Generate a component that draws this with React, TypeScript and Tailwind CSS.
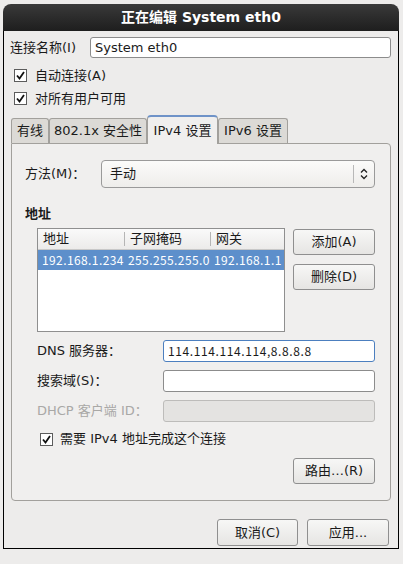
import React from "react";

const FONT = { fontFamily: '"DejaVu Sans", "Noto Sans CJK SC", sans-serif' };
const CJK = { fontFamily: '"Noto Sans CJK SC", "DejaVu Sans", sans-serif' };

function Check() {
  return (
    <svg width="13" height="13" viewBox="0 0 13 13" className="shrink-0">
      <rect x="0.5" y="0.5" width="12" height="12" fill="#ffffff" stroke="#5c5c5c" />
      <path d="M3 6.5 L5.5 9.5 L10 3" fill="none" stroke="#111" strokeWidth="1.8" />
    </svg>
  );
}

function Btn({ label, className = "" }: { label: string; className?: string }) {
  return (
    <div
      className={`flex items-center justify-center rounded-[3px] border border-[#8f8f8f] bg-gradient-to-b from-[#f7f7f6] to-[#e6e5e3] text-[13px] text-[#1a1a1a] ${className}`}
    >
      {label}
    </div>
  );
}

function Tab({ label, w, active }: { label: string; w: string; active?: boolean }) {
  if (active) {
    return (
      <div
        className={`${w} h-[29px] -mb-px relative z-10 flex items-center justify-center rounded-t-[4px] border border-b-0 border-[#a2a09c] border-t-[#6f93c8] border-t-2 bg-[#f0efee] text-[13px]`}
      >
        {label}
      </div>
    );
  }
  return (
    <div
      className={`${w} h-[25px] flex items-center justify-center rounded-t-[3px] border border-b-0 border-[#a2a09c] bg-[#dcdad6] text-[13px]`}
    >
      {label}
    </div>
  );
}

export default function App() {
  return (
    <div className="w-[403px] h-[564px] bg-[#edeceb] pt-[4px] pl-[3px] text-[#1a1a1a]" style={FONT}>
      <div className="w-[396px] flex flex-col">
        {/* Title bar */}
        <div className="h-[27px] rounded-t-[8px] bg-gradient-to-b from-[#3a3a3a] to-[#1e1e1e] flex items-center justify-center text-white font-bold text-[14px]">
          正在编辑 System eth0
        </div>

        {/* Body */}
        <div className="border-x border-b border-black bg-[#edeceb] pl-[7px] pr-[6px] pt-[6px] pb-[2px] flex flex-col">
          <div className="flex items-center h-[21px]">
            <div className="w-[80px] -ml-[1px] text-[13px]">连接名称(I)</div>
            <div className="flex-1 h-[21px] mr-[1px] rounded-[3px] border border-[#8c8c8c] bg-white flex items-center pl-[4px] text-[13px]">
              System eth0
            </div>
          </div>

          <div className="mt-[6px] h-[23px] flex items-center gap-[8px] pl-[3px] text-[13px]">
            <Check />
            <span>自动连接(A)</span>
          </div>
          <div className="h-[23px] flex items-center gap-[8px] pl-[3px] text-[13px]">
            <Check />
            <span>对所有用户可用</span>
          </div>

          {/* Tabs */}
          <div className="mt-[5px] h-[28px] flex items-end">
            <Tab label="有线" w="w-[38px]" />
            <Tab label="802.1x 安全性" w="w-[98px]" />
            <Tab label="IPv4 设置" w="w-[71px]" active />
            <Tab label="IPv6 设置" w="w-[70px]" />
          </div>

          {/* Panel */}
          <div className="w-[380px] rounded-b-[4px] rounded-tr-[4px] border border-[#a2a09c] bg-[#f0efee] pl-[13px] pr-[15px] pt-[16px] pb-[16px] flex flex-col">
            <div className="flex items-center h-[28px]">
              <div className="w-[76px] text-[13px]">方法(M)：</div>
              <div className="flex-1 h-[28px] rounded-[4px] border border-[#9a9a9a] bg-gradient-to-b from-[#fbfbfa] to-[#eeedeb] flex items-center">
                <span className="flex-1 pl-[8px] text-[13px]">手动</span>
                <div className="w-px h-[18px] bg-[#b8b8b8]" />
                <svg width="18" height="16" viewBox="0 0 18 16" className="mx-[1px]">
                  <path d="M6 6.5 L9 3.5 L12 6.5" fill="none" stroke="#222" strokeWidth="1.3" />
                  <path d="M6 9.5 L9 12.5 L12 9.5" fill="none" stroke="#222" strokeWidth="1.3" />
                </svg>
              </div>
            </div>

            <div className="mt-[17px] h-[17px] flex items-center font-bold text-[13px]">地址</div>

            <div className="mt-[6px] flex pl-[12px] gap-[8px]">
              <div className="w-[248px] h-[104px] border border-[#8f8f8f] bg-white flex flex-col">
                <div className="h-[21px] flex items-center bg-gradient-to-b from-[#fafafa] to-[#ecebea] border-b border-[#c8c8c8] text-[13px]">
                  <div className="w-[86px] pl-[5px]">地址</div>
                  <div className="w-px h-[14px] bg-[#b5b5b5]" />
                  <div className="w-[85px] pl-[5px]">子网掩码</div>
                  <div className="w-px h-[14px] bg-[#b5b5b5]" />
                  <div className="flex-1 pl-[5px]">网关</div>
                </div>
                <div className="h-[20px] flex items-center bg-[#5d8fcb] text-white text-[12px] whitespace-nowrap tracking-[0.4px]" style={CJK}>
                  <div className="w-[86px] pl-[4px] overflow-hidden">192.168.1.234</div>
                  <div className="w-[86px] pl-[4px] overflow-hidden">255.255.255.0</div>
                  <div className="flex-1 pl-[4px] overflow-hidden">192.168.1.1</div>
                </div>
              </div>
              <div className="flex flex-col gap-[9px] pt-[1px]">
                <Btn label="添加(A)" className="w-[82px] h-[26px]" />
                <Btn label="删除(D)" className="w-[82px] h-[26px]" />
              </div>
            </div>

            <div className="mt-[8px] flex items-center pl-[12px] h-[22px]">
              <div className="w-[126px] text-[13px]">DNS 服务器：</div>
              <div className="flex-1 h-[22px] rounded-[3px] border border-[#4c7fbf] bg-white flex items-center pl-[4px] text-[12px] whitespace-nowrap tracking-[0.6px]" style={CJK}>
                114.114.114.114,8.8.8.8
              </div>
            </div>
            <div className="mt-[8px] flex items-center pl-[12px] h-[22px]">
              <div className="w-[126px] text-[13px]">搜索域(S)：</div>
              <div className="flex-1 h-[22px] rounded-[3px] border border-[#8c8c8c] bg-white" />
            </div>
            <div className="mt-[8px] flex items-center pl-[12px] h-[22px]">
              <div className="w-[126px] text-[13px] text-[#a9a8a6]">DHCP 客户端 ID：</div>
              <div className="flex-1 h-[22px] rounded-[3px] border border-[#bdbcba] bg-[#e4e3e1]" />
            </div>

            <div className="mt-[8px] h-[18px] flex items-center gap-[7px] pl-[15px] text-[13px]">
              <Check />
              <span>需要 IPv4 地址完成这个连接</span>
            </div>

            <div className="mt-[10px] flex justify-end">
              <Btn label="路由…(R)" className="w-[82px] h-[26px]" />
            </div>
          </div>

          <div className="mt-[18px] flex justify-end gap-[9px] pr-[3px]">
            <Btn label="取消(C)" className="w-[81px] h-[27px]" />
            <Btn label="应用..." className="w-[82px] h-[27px]" />
          </div>
        </div>
      </div>
    </div>
  );
}
